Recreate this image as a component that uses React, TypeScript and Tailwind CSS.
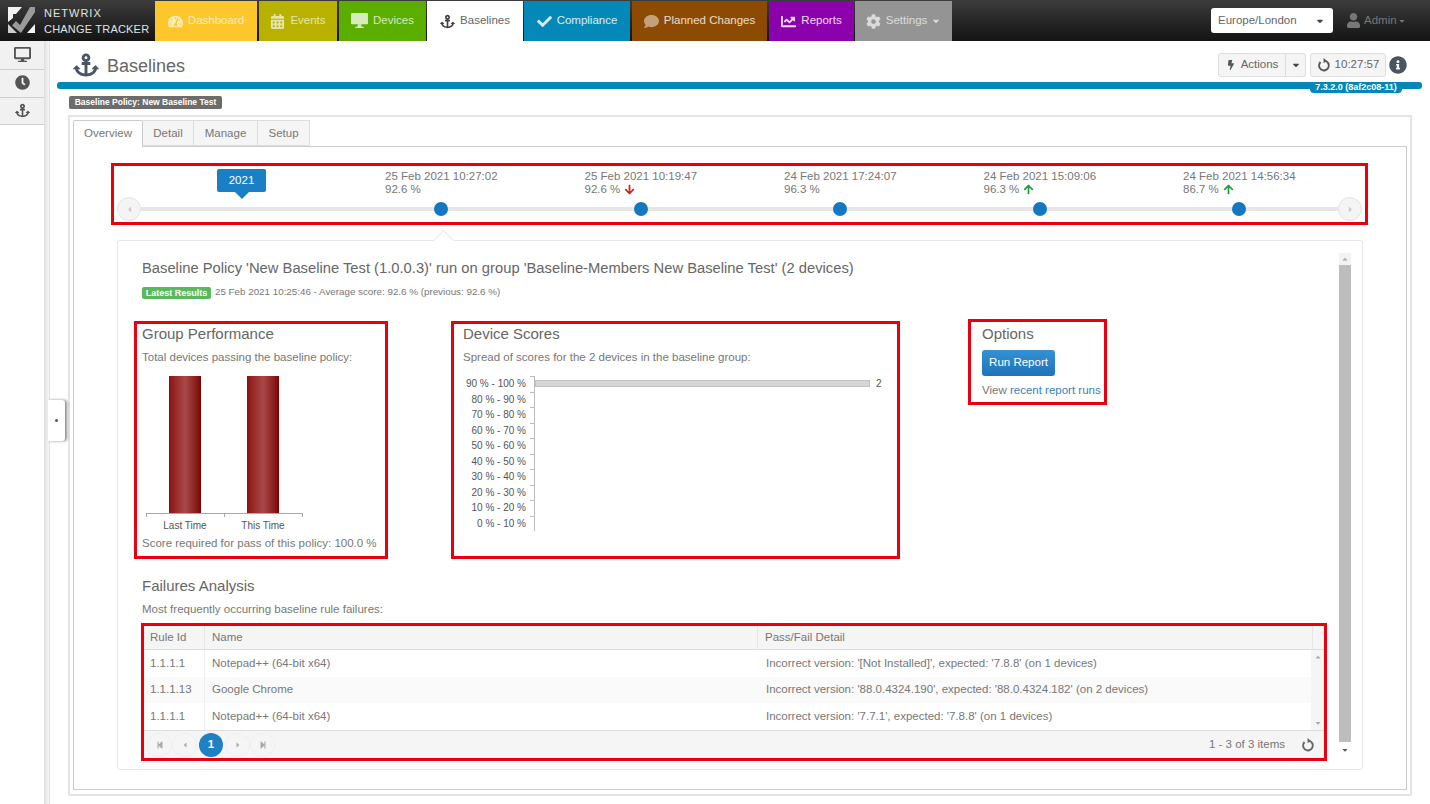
import { ReactNode } from "react";
import {
  FaAnchor,
  FaArrowDown,
  FaArrowUp,
  FaBolt,
  FaCalendarAlt,
  FaCaretDown,
  FaCaretLeft,
  FaCaretRight,
  FaCaretUp,
  FaChartLine,
  FaCheck,
  FaClock,
  FaCog,
  FaComment,
  FaDesktop,
  FaInfoCircle,
  FaStepBackward,
  FaStepForward,
  FaTachometerAlt,
  FaUser,
} from "react-icons/fa";

const Refresh = ({ className }: { className?: string }) => (
  <svg viewBox="0 0 16 16" className={className} fill="none" stroke="currentColor" strokeWidth="2.2">
    <path d="M9.5 3.2A5.6 5.6 0 1 1 4 4.6" />
    <path d="M7.5 0v6l3.6-3z" fill="currentColor" stroke="none" />
  </svg>
);

const Monitor = () => (
  <svg viewBox="0 0 18 17" className="w-[17px] h-[16px]" fill="currentColor">
    <rect x="0" y="0" width="18" height="12" rx="1" />
    <path d="M7 12h4v2.5h2.5V16h-9v-1.500H7z" />
  </svg>
);

const Logo = () => (
  <svg viewBox="0 0 27 27" className="w-[27px] h-[27px] ml-[8px] mr-[9px] shrink-0">
    <path d="M0 0H14L8 7H5V11L0 15Z" fill="#f2f2f2" />
    <path d="M27 0V5L13 26L4 18.5L8 14L12 18L22 0Z" fill="#9a9a9a" />
    <path d="M0 17L9 26H0Z" fill="#cfcfcf" />
    <path d="M27 17V26H19Z" fill="#f2f2f2" />
  </svg>
);

const navTabs = [
  { label: "Dashboard", icon: <FaTachometerAlt />, w: "w-[102px]", bg: "bg-[#fdc62b]", text: "text-white/65", mr: "mr-[2px]" },
  { label: "Events", icon: <FaCalendarAlt />, w: "w-[78px]", bg: "bg-[#b8b100]", text: "text-white/65", mr: "mr-[2px]" },
  { label: "Devices", icon: <Monitor />, w: "w-[87px]", bg: "bg-[#5bae00]", text: "text-white/75", mr: "mr-[1px]" },
  { label: "Baselines", icon: <FaAnchor className="text-[#444]" />, w: "w-[96px]", bg: "bg-white", text: "text-[#666]", mr: "mr-[1px]" },
  { label: "Compliance", icon: <FaCheck />, w: "w-[106px]", bg: "bg-[#0388b7]", text: "text-white/85", mr: "mr-[2px]" },
  { label: "Planned Changes", icon: <FaComment className="opacity-60" />, w: "w-[135px]", bg: "bg-[#8c4a02]", text: "text-white/80", mr: "mr-[2px]" },
  { label: "Reports", icon: <FaChartLine />, w: "w-[85px]", bg: "bg-[#8b02ac]", text: "text-white/85", mr: "mr-[1px]" },
  { label: "Settings", icon: <FaCog />, w: "w-[97px]", bg: "bg-[#949494]", text: "text-white/65", mr: "" },
];

const runs = [
  { date: "25 Feb 2021 10:27:02", score: "92.6 %", arrow: null },
  { date: "25 Feb 2021 10:19:47", score: "92.6 %", arrow: "down" },
  { date: "24 Feb 2021 17:24:07", score: "96.3 %", arrow: null },
  { date: "24 Feb 2021 15:09:06", score: "96.3 %", arrow: "up" },
  { date: "24 Feb 2021 14:56:34", score: "86.7 %", arrow: "up" },
];

const spread = [
  "90 % - 100 %",
  "80 % - 90 %",
  "70 % - 80 %",
  "60 % - 70 %",
  "50 % - 60 %",
  "40 % - 50 %",
  "30 % - 40 %",
  "20 % - 30 %",
  "10 % - 20 %",
  "0 % - 10 %",
];

const failures = [
  { id: "1.1.1.1", name: "Notepad++ (64-bit x64)", detail: "Incorrect version: '[Not Installed]', expected: '7.8.8' (on 1 devices)", bg: "bg-white" },
  { id: "1.1.1.13", name: "Google Chrome", detail: "Incorrect version: '88.0.4324.190', expected: '88.0.4324.182' (on 2 devices)", bg: "bg-[#fafafa]" },
  { id: "1.1.1.1", name: "Notepad++ (64-bit x64)", detail: "Incorrect version: '7.7.1', expected: '7.8.8' (on 1 devices)", bg: "bg-white" },
];

const RedBox = ({ className, children }: { className?: string; children: ReactNode }) => (
  <div className={`border-[3px] border-[#e8000f] ${className ?? ""}`}>{children}</div>
);

const SideButton = ({ children, h }: { children: ReactNode; h: string }) => (
  <div className={`${h} flex items-center justify-center pb-[2px] border-b border-[#cfcfcf] bg-[#f1f1f1] text-[#555]`}>{children}</div>
);

const Bar = () => (
  <div className="w-[78px] flex justify-center">
    <div className="w-[32px] h-[137px] bg-gradient-to-r from-[#8a1010] via-[#a84848] to-[#7a0000]" />
  </div>
);

const PagerButton = ({ children }: { children: ReactNode }) => (
  <div className="w-[25px] h-[24px] rounded-full border border-[#efefef] flex items-center justify-center text-[#aaa] text-[8px]">
    {children}
  </div>
);

export default function App() {
  return (
    <div className="w-[1430px] h-[804px] overflow-hidden bg-white text-[#777] font-['Liberation_Sans',Arial,sans-serif]">
      <header className="h-[41px] flex bg-gradient-to-b from-[#3c3c3c] to-[#141414]">
        <div className="w-[155px] flex items-center shrink-0">
          <Logo />
          <div className="text-[11px] leading-[16px] text-[#e2e2e2] whitespace-nowrap">
            <div className="tracking-[1px]">NETWRIX</div>
            <div className="tracking-[0.2px]">CHANGE TRACKER</div>
          </div>
        </div>
        {navTabs.map((t) => (
          <div key={t.label} className={`${t.w} ${t.bg} ${t.text} ${t.mr} mt-[1px] flex items-center justify-center gap-[5px] text-[11.5px] whitespace-nowrap`}>
            <span className="text-[15px]">{t.icon}</span>
            {t.label}
            {t.label === "Settings" && <FaCaretDown className="text-[10px] -ml-[1px]" />}
          </div>
        ))}
        <div className="flex-1 flex items-center justify-end">
          <div className="w-[122px] h-[25px] bg-white rounded-[3px] flex items-center justify-between pl-[7px] pr-[8px] text-[11.5px] text-[#666]">
            Europe/London
            <FaCaretDown className="text-[10px] text-[#444]" />
          </div>
          <div className="w-[97px] pl-[13px] flex items-center gap-[3px] text-[11.5px] text-[#777]">
            <FaUser className="text-[15px]" />
            Admin
            <FaCaretDown className="text-[8px] -ml-[2px]" />
          </div>
        </div>
      </header>

      <div className="flex h-[763px] relative">
        <aside className="w-[44px] shrink-0">
          <SideButton h="h-[29px]"><FaDesktop className="text-[17px]" /></SideButton>
          <SideButton h="h-[28px]"><FaClock className="text-[15px]" /></SideButton>
          <SideButton h="h-[27px]"><FaAnchor className="text-[15px]" /></SideButton>
        </aside>
        <div className="w-[6px] shrink-0 bg-gradient-to-r from-[#dedede] to-[#f6f6f6] border-r border-[#e2e2e2]" />
        <div className="absolute left-[48px] top-[359px] w-[17px] h-[41px] bg-white rounded-r-[3px] shadow-[2px_0_3px_#8a8a8a] flex items-center justify-center">
          <div className="w-[3px] h-[3px] rounded-full bg-[#555]" />
        </div>

        <main className="flex-1 min-w-0">
          <div className="h-[41px] flex items-center pt-[6px] pl-[23px] pr-[23px]">
            <FaAnchor className="text-[26px] text-[#4a5564]" />
            <h1 className="ml-[8px] mt-[4px] text-[18px] text-[#666]">Baselines</h1>
            <div className="ml-auto flex items-center text-[11.5px] text-[#666]">
              <div className="w-[68px] h-[24px] flex items-center justify-center gap-[5px] border border-[#ddd] rounded-l-[3px] bg-[#f5f5f5]">
                <FaBolt className="text-[10px] text-[#555]" />
                Actions
              </div>
              <div className="w-[20px] h-[24px] flex items-center justify-center border border-l-0 border-[#ddd] rounded-r-[3px] bg-[#f5f5f5]">
                <FaCaretDown className="text-[10px] text-[#444]" />
              </div>
              <div className="ml-[4px] w-[76px] h-[24px] flex items-center justify-center gap-[4px] border border-[#ddd] rounded-[3px] bg-[#f5f5f5]">
                <Refresh className="w-[14px] h-[14px] text-[#555]" />
                10:27:57
              </div>
              <FaInfoCircle className="ml-[3px] text-[18px] text-[#4a5564]" />
            </div>
          </div>

          <div className="relative ml-[7px] mr-[8px] h-[7px] rounded-[3px] bg-[#0288b6]">
            <div className="absolute right-[20px] top-0 w-[92px] h-[11px] rounded-b-[4px] bg-[#0288b6] text-white text-[9px] font-bold leading-[10px] text-center">
              7.3.2.0 (8af2c08-11)
            </div>
          </div>

          <div className="ml-[19px] mt-[7px] w-[153px] h-[13px] rounded-[2px] bg-[#6c6c6c] text-white text-[8.5px] font-bold leading-[13px] text-center whitespace-nowrap">
            Baseline Policy: New Baseline Test
          </div>

          <div className="ml-[18px] mt-[6px] w-[1344px] h-[681px] border-2 border-[#e4e4e4] px-[3px] pt-[3px]">
            <div className="flex h-[26px] text-[11.5px] text-[#777] leading-[24px]">
              <div className="w-[70px] h-[27px] bg-white border border-b-0 border-[#ccc] rounded-t-[2px] text-center relative z-10">Overview</div>
              <div className="w-[51px] bg-[#f5f5f5] border border-l-0 border-[#ddd] text-center">Detail</div>
              <div className="w-[64px] bg-[#f5f5f5] border border-l-0 border-[#ddd] text-center">Manage</div>
              <div className="w-[52px] bg-[#f5f5f5] border border-l-0 border-[#ddd] text-center">Setup</div>
            </div>

            <div className="w-[1334px] h-[644px] border border-[#ccc] pl-[37px] pt-[16px]">
              <RedBox className="w-[1257px] h-[62px]">
                <div className="flex h-[31px] pl-[103px] pt-[3px] text-[11.5px] leading-[13px]">
                  <div className="relative w-[49px] h-[23px] shrink-0 rounded-[2px] bg-[#1a80c6] text-white flex items-center justify-center">
                    <div className="absolute left-[20px] -bottom-[5px] w-[10px] h-[10px] rotate-45 bg-[#1a80c6]" />
                    <span className="relative">2021</span>
                  </div>
                  <div className="w-[119px] shrink-0" />
                  {runs.map((r) => (
                    <div key={r.date} className="w-[199.5px] mt-[1px] shrink-0 whitespace-nowrap">
                      <div>{r.date}</div>
                      <div className="flex items-center gap-[4px]">
                        {r.score}
                        {r.arrow === "up" && <FaArrowUp className="text-[11px] text-[#1f9a3c]" />}
                        {r.arrow === "down" && <FaArrowDown className="text-[11px] text-[#d0200f]" />}
                      </div>
                    </div>
                  ))}
                </div>
                <div className="flex items-center h-[24px] pl-[3px]">
                  <div className="w-[24px] h-[24px] rounded-full border border-[#e3e3e3] bg-[#f4f4f4] flex items-center justify-center text-[#ccc] text-[9px] shrink-0">
                    <FaCaretLeft />
                  </div>
                  <div className="w-[1197px] h-[24px] relative flex items-center pl-[293px]">
                    <div className="absolute left-0 right-0 top-[10px] h-[4px] bg-[#e6e6e6]" />
                    {runs.map((r) => (
                      <div key={r.date} className="w-[199.5px] shrink-0 relative">
                        <div className="w-[14px] h-[14px] rounded-full bg-[#1478c0]" />
                      </div>
                    ))}
                  </div>
                  <div className="w-[24px] h-[24px] rounded-full border border-[#e3e3e3] bg-[#f4f4f4] flex items-center justify-center text-[#ccc] text-[9px] shrink-0">
                    <FaCaretRight />
                  </div>
                </div>
              </RedBox>

              <div className="relative ml-[6px] mt-[15px] w-[1246px] h-[530px] border border-[#e8e8e8] rounded-[3px] flex">
                <div className="absolute left-[318px] -top-[8px] w-[15px] h-[15px] rotate-45 bg-white border-l border-t border-[#e8e8e8]" />
                <div className="relative flex-1 min-w-0">
                  <h2 className="pl-[24px] pt-[18px] text-[14.75px] leading-[19px] text-[#666] whitespace-nowrap">
                    Baseline Policy 'New Baseline Test (1.0.0.3)' run on group 'Baseline-Members New Baseline Test' (2 devices)
                  </h2>
                  <div className="pl-[24px] mt-[8px] h-[13px] flex items-center gap-[4px] text-[9.8px] whitespace-nowrap">
                    <span className="w-[69px] h-[12px] rounded-[2px] bg-[#5cb85c] text-white text-[9px] font-bold leading-[12px] text-center">Latest Results</span>
                    25 Feb 2021 10:25:46 - Average score: 92.6 % (previous: 92.6 %)
                  </div>

                  <div className="flex items-start pl-[16px] mt-[22px] h-[238px]">
                    <RedBox className="w-[254px] h-[238px] pl-[5px] shrink-0">
                      <h3 className="text-[15px] leading-[20px] text-[#666]">Group Performance</h3>
                      <p className="mt-[5px] text-[11.5px] leading-[16px] whitespace-nowrap">Total devices passing the baseline policy:</p>
                      <div className="mt-[11px] ml-[4px] w-[156px] flex">
                        <Bar />
                        <Bar />
                      </div>
                      <div className="ml-[4px] w-[157px] h-[4px] border border-b-0 border-[#aaa] relative">
                        <div className="absolute left-[77px] top-0 h-[3px] w-px bg-[#aaa]" />
                      </div>
                      <div className="ml-[4px] mt-[3px] w-[156px] flex text-[10px] leading-[12px] text-[#555]">
                        <div className="w-[78px] text-center">Last Time</div>
                        <div className="w-[78px] text-center">This Time</div>
                      </div>
                      <p className="mt-[4px] text-[11.5px] leading-[14px] whitespace-nowrap">Score required for pass of this policy: 100.0 %</p>
                    </RedBox>

                    <RedBox className="ml-[63px] w-[449px] h-[238px] pl-[9px] shrink-0">
                      <h3 className="text-[15px] leading-[20px] text-[#666]">Device Scores</h3>
                      <p className="mt-[5px] text-[11.5px] leading-[16px] whitespace-nowrap">Spread of scores for the 2 devices in the baseline group:</p>
                      <div className="mt-[11px] -ml-[9px]">
                        {spread.map((label, i) => (
                          <div key={label} className="flex h-[15.5px] items-center">
                            <div className="w-[72px] text-right text-[10px] text-[#555] whitespace-nowrap">{label}</div>
                            <div className="ml-[4px] w-[5px] h-full border-r border-t border-[#bbb]" />
                            {i === 0 && (
                              <>
                                <div className="w-[335px] h-[7px] bg-[#d6d6d6] border border-[#c2c2c2]" />
                                <span className="ml-[6px] text-[10px] text-[#555]">2</span>
                              </>
                            )}
                          </div>
                        ))}
                      </div>
                    </RedBox>

                    <RedBox className="ml-[68px] -mt-[2px] w-[139px] h-[86px] pl-[11px] shrink-0">
                      <h3 className="pt-[2px] text-[15px] leading-[20px] text-[#666]">Options</h3>
                      <button className="mt-[6px] w-[73px] h-[26px] rounded-[3px] bg-gradient-to-b from-[#3391d4] to-[#1f73b9] text-white text-[11.5px] font-medium">Run Report</button>
                      <p className="mt-[6px] text-[11.5px] leading-[16px] whitespace-nowrap">
                        View <a className="text-[#3a7fb8]">recent report runs</a>
                      </p>
                    </RedBox>
                  </div>

                  <h3 className="pl-[24px] mt-[17px] text-[15px] leading-[20px] text-[#666]">Failures Analysis</h3>
                  <p className="pl-[24px] mt-[5px] text-[11.5px] leading-[16px]">Most frequently occurring baseline rule failures:</p>

                  <RedBox className="ml-[23px] mt-[6px] w-[1186px] h-[138px] text-[11.5px]">
                    <div className="flex h-[24px] bg-[#f5f5f5] border-b border-[#ddd] leading-[23px]">
                      <div className="w-[61px] pl-[6px] border-r border-[#e6e6e6]">Rule Id</div>
                      <div className="w-[553px] pl-[7px] border-r border-[#e6e6e6]">Name</div>
                      <div className="w-[555px] pl-[7px] border-r border-[#e6e6e6]">Pass/Fail Detail</div>
                      <div className="flex-1" />
                    </div>
                    <div className="flex h-[80px]">
                      <div className="flex-1 min-w-0">
                        {failures.map((f, i) => (
                          <div key={i} className={`flex h-[26.6px] items-center ${f.bg}`}>
                            <div className="w-[61px] h-full pl-[6px] border-r border-[#eee] flex items-center">{f.id}</div>
                            <div className="w-[553px] pl-[7px]">{f.name}</div>
                            <div className="pl-[8px] whitespace-nowrap">{f.detail}</div>
                          </div>
                        ))}
                      </div>
                      <div className="w-[13px] flex flex-col items-center justify-between bg-[#f5f5f5] text-[#aaa] text-[8px] py-[3px]">
                        <FaCaretUp />
                        <FaCaretDown />
                      </div>
                    </div>
                    <div className="flex items-center h-[28px] bg-[#f5f5f5] border-t border-[#ddd] pl-[3px] pr-[9px]">
                      <PagerButton><FaStepBackward /></PagerButton>
                      <PagerButton><FaCaretLeft /></PagerButton>
                      <div className="relative z-10 mx-[2px] w-[24px] h-[24px] rounded-full bg-[#1f80c4] text-white font-bold flex items-center justify-center">1</div>
                      <PagerButton><FaCaretRight /></PagerButton>
                      <PagerButton><FaStepForward /></PagerButton>
                      <span className="ml-auto">1 - 3 of 3 items</span>
                      <Refresh className="ml-[16px] w-[14px] h-[14px] text-[#666]" />
                    </div>
                  </RedBox>
                </div>

                <div className="w-[12px] mr-[11px] mt-[12px] mb-[12px] flex flex-col text-[8px] text-[#555] shrink-0">
                  <div className="h-[12px] flex items-center justify-center bg-[#f3f3f3] text-[#aaa]"><FaCaretUp /></div>
                  <div className="flex-1 bg-[#bdbdbd]" />
                  <div className="h-[15px] flex items-center justify-center"><FaCaretDown /></div>
                </div>
              </div>
            </div>
          </div>
        </main>
      </div>
    </div>
  );
}
